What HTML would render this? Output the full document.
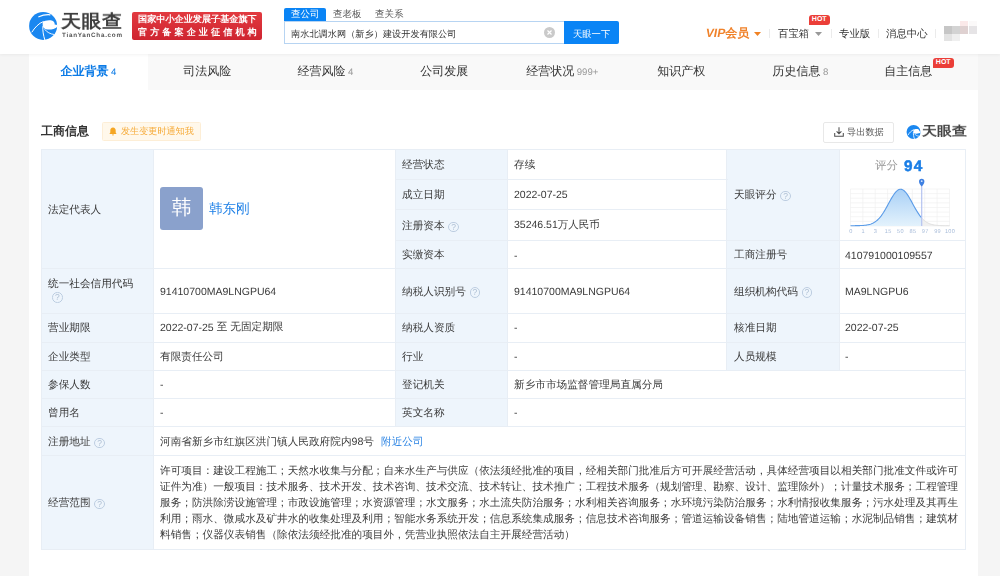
<!DOCTYPE html>
<html><head><meta charset="utf-8">
<style>
*{margin:0;padding:0;box-sizing:border-box}
html,body{width:1000px;height:576px;overflow:hidden}
.abs,.cell,.tab{will-change:transform}
body{text-rendering:geometricPrecision;background:#f5f5f5;font-family:"Liberation Sans",sans-serif;color:#333;position:relative;font-size:10.5px}
.abs{position:absolute;white-space:nowrap}
#hdr{position:absolute;left:0;top:0;width:1000px;height:54px;background:#fff;box-shadow:0 1px 3px rgba(0,0,0,0.05);z-index:2}
#tabs{position:absolute;left:29px;top:54px;width:949px;height:36.3px;background:#f9f9f9}
.tab{position:absolute;top:0;height:36px;width:118.6px;text-align:center;line-height:34px;font-size:12px;color:#333}
.tab.on{background:#fff;color:#0a7ae6;font-weight:bold}
.tab sup{font-size:9.6px;color:#999;vertical-align:0;font-weight:normal;margin-left:2.5px}
.tab.on sup{color:#0a7ae6}
#main{position:absolute;left:29px;top:90px;width:949px;height:486px;background:#fff}
table{position:absolute;left:41px;top:149px;border-collapse:collapse;table-layout:fixed;width:925px}
td{border:1px solid #e5ecf3;font-size:10.5px;color:#333;padding:0 6px;vertical-align:middle;white-space:nowrap}
td.l{background:#eef5fc}
.q{display:inline-block;width:10.5px;height:10.5px;border:1px solid #bccde0;border-radius:50%;color:#aebfd3;font-size:8.5px;line-height:8.5px;text-align:center;vertical-align:-0.5px;margin-left:3.8px;font-weight:normal}
.hot{position:absolute;background:#eb3e38;color:#fff;font-size:7px;font-weight:bold;line-height:10px;height:10px;width:20.5px;text-align:center;border-radius:3px 3px 3px 0.5px}
.sep{position:absolute;top:28.5px;width:1px;height:9px;background:#ebebeb}
.cell{position:absolute;display:flex;align-items:center;padding-top:3px;white-space:nowrap;font-size:10.65px;color:#3a3a3a}
</style></head><body>
<div id="hdr">
  <svg class="abs" style="left:28px;top:10px" width="30" height="32" viewBox="0 0 540 576">
    <circle cx="272" cy="286" r="252" fill="#1a87f0"/>
    <path d="M268 215 C300 188 380 172 440 192 C472 208 484 238 480 262 C495 262 515 265 530 272 L530 300 C490 338 420 356 355 352 C305 348 276 325 268 292 C262 265 262 235 268 215 Z" fill="#fff"/>
    <path d="M195 122 C250 96 330 82 395 86" stroke="#fff" stroke-width="22" fill="none" stroke-linecap="round"/>
    <path d="M68 402 C120 320 190 240 282 205" stroke="#fff" stroke-width="18" fill="none"/>
    <path d="M268 290 C262 370 275 450 305 545" stroke="#fff" stroke-width="18" fill="none"/>
    <path d="M298 345 C340 400 400 432 475 442" stroke="#fff" stroke-width="16" fill="none"/>
  </svg>
  <div class="abs" style="left:61px;top:9.5px;font-size:20px;line-height:23px;color:#3e3e3e;font-weight:bold;letter-spacing:0.5px;transform:scaleY(0.9);transform-origin:0 19px">天眼查</div>
  <div class="abs" style="left:62px;top:31.5px;font-size:6.3px;line-height:7px;color:#555;font-weight:bold;letter-spacing:0.72px">TianYanCha.com</div>
  <div class="abs" style="left:132px;top:12px;width:130px;height:28px;background:linear-gradient(#e23a40,#cf2430);border-radius:2px"></div>
  <div class="abs" style="left:137.5px;top:13px;font-size:9.15px;color:#fff;line-height:13px;font-weight:bold">国家中小企业发展子基金旗下</div>
  <div class="abs" style="left:137.5px;top:26px;font-size:9.15px;color:#fff;line-height:13px;letter-spacing:3.05px;font-weight:bold">官方备案企业征信机构</div>

  <div class="abs" style="left:284px;top:8px;width:42px;height:13px;background:#0a84f5;border-radius:2px 2px 0 0"></div>
  <div class="abs" style="left:290.5px;top:8px;font-size:9.5px;line-height:14px;color:#fff">查公司</div>
  <div class="abs" style="left:332.5px;top:8px;font-size:9.5px;line-height:14px;color:#555">查老板</div>
  <div class="abs" style="left:374.5px;top:8px;font-size:9.5px;line-height:14px;color:#555">查关系</div>
  <div class="abs" style="left:284px;top:21px;width:281px;height:23px;border:1px solid #b7d4f2;border-right:none;background:#fff"></div>
  <div class="abs" style="left:290.5px;top:27px;font-size:9.2px;line-height:14px;color:#333">南水北调水网（新乡）建设开发有限公司</div>
  <div class="abs" style="left:543.5px;top:27px;width:11px;height:11px;border-radius:50%;background:#cacaca"></div>
  <svg class="abs" style="left:543.5px;top:27px" width="11" height="11" viewBox="0 0 11 11"><path d="M3.5 3.5L7.5 7.5M7.5 3.5L3.5 7.5" stroke="#fff" stroke-width="1.2"/></svg>
  <div class="abs" style="left:564px;top:21px;width:55px;height:23px;background:#0a84f5;border-radius:0 2px 2px 0"></div>
  <div class="abs" style="left:573px;top:26.5px;font-size:9.3px;line-height:14px;color:#fff">天眼一下</div>

  <div class="abs" style="left:705.5px;top:25.7px;font-size:12px;line-height:14px;color:#f0822a;font-weight:bold"><span style="display:inline-block;transform:skewX(-10deg);letter-spacing:0px">VIP</span>会员</div>
  <svg class="abs" style="left:754px;top:31.5px" width="7" height="4" viewBox="0 0 7 4"><path d="M0 0H7L3.5 4Z" fill="#f08224"/></svg>
  <div class="sep" style="left:769px"></div>
  <div class="abs" style="left:778px;top:26.5px;font-size:10.4px;line-height:16px;color:#333">百宝箱</div>
  <svg class="abs" style="left:815px;top:31.5px" width="7" height="4" viewBox="0 0 7 4"><path d="M0 0H7L3.5 4Z" fill="#999"/></svg>
  <div class="hot" style="left:809px;top:14.5px;height:10px">HOT</div>
  <div class="sep" style="left:831px"></div>
  <div class="abs" style="left:839px;top:26.5px;font-size:10.4px;line-height:16px;color:#333">专业版</div>
  <div class="sep" style="left:877.5px"></div>
  <div class="abs" style="left:886px;top:26.5px;font-size:10.4px;line-height:16px;color:#333">消息中心</div>
  <div class="sep" style="left:935px"></div>
  <div class="abs" style="left:960.4px;top:21.2px;width:8.2px;height:4.7px;background:#fbe9e9"></div>
  <div class="abs" style="left:968.6px;top:21.2px;width:8.2px;height:4.7px;background:#fbf9f9"></div>
  <div class="abs" style="left:944px;top:25.9px;width:8px;height:8.4px;background:#c6c6c6"></div>
  <div class="abs" style="left:952px;top:25.9px;width:8.4px;height:8.4px;background:#d3d3d3"></div>
  <div class="abs" style="left:960.4px;top:25.9px;width:8.2px;height:8.4px;background:#dfd1d1"></div>
  <div class="abs" style="left:968.6px;top:25.9px;width:8.2px;height:8.4px;background:#e6e4e6"></div>
  <div class="abs" style="left:944px;top:34.3px;width:8px;height:6.5px;background:#e3e3e3"></div>
  <div class="abs" style="left:952px;top:34.3px;width:8.4px;height:6.5px;background:#efefef"></div>
</div>

<div id="tabs">
  <div class="tab on" style="left:0">企业背景<sup>4</sup></div>
  <div class="tab" style="left:118.6px">司法风险</div>
  <div class="tab" style="left:237.2px">经营风险<sup>4</sup></div>
  <div class="tab" style="left:355.8px">公司发展</div>
  <div class="tab" style="left:474.4px">经营状况<sup>999+</sup></div>
  <div class="tab" style="left:593px">知识产权</div>
  <div class="tab" style="left:711.6px">历史信息<sup>8</sup></div>
  <div class="tab" style="left:830.2px;padding-right:20px">自主信息</div>
  <div class="hot" style="left:904px;top:4px">HOT</div>
</div>

<div id="main"></div>
<div class="abs" style="left:41px;top:122.5px;font-size:12px;line-height:16px;font-weight:bold;color:#333">工商信息</div>
<div class="abs" style="left:102px;top:121.5px;width:99px;height:18.5px;background:#fff8eb;border:1px solid #fdeed6;border-radius:1.5px"></div>
<svg class="abs" style="left:108.7px;top:127.3px" width="8" height="9" viewBox="0 0 8 9"><path d="M4 0.6C2.2 0.6 1.3 2 1.3 3.6V5.6L0.4 6.9H7.6L6.7 5.6V3.6C6.7 2 5.8 0.6 4 0.6Z M3 7.6A1 1 0 0 0 5 7.6Z" fill="#f5a623"/></svg>
<div class="abs" style="left:121px;top:125.3px;font-size:9.1px;line-height:13px;color:#f6ab3a">发生变更时通知我</div>
<div class="abs" style="left:823px;top:121.8px;width:70.5px;height:20.7px;background:#fff;border:1px solid #e8e8e8;border-radius:2px"></div>
<svg class="abs" style="left:833.8px;top:126.6px" width="10" height="10" viewBox="0 0 10 10"><path d="M5 0.3V6.6M2.6 4.3L5 6.7L7.4 4.3M0.7 6V9.3H9.3V6" stroke="#505050" stroke-width="1.05" fill="none"/></svg>
<div class="abs" style="left:846.8px;top:125.3px;font-size:9.2px;line-height:14px;color:#555">导出数据</div>
<svg class="abs" style="left:905.5px;top:123.7px" width="15" height="16" viewBox="0 0 540 576">
    <circle cx="272" cy="286" r="252" fill="#1a87f0"/>
    <path d="M268 215 C300 188 380 172 440 192 C472 208 484 238 480 262 C495 262 515 265 530 272 L530 300 C490 338 420 356 355 352 C305 348 276 325 268 292 C262 265 262 235 268 215 Z" fill="#fff"/>
    <path d="M68 402 C120 320 190 240 282 205" stroke="#fff" stroke-width="30" fill="none"/>
    <path d="M268 290 C262 370 275 450 305 545" stroke="#fff" stroke-width="30" fill="none"/>
    <path d="M298 345 C340 400 400 432 475 442" stroke="#fff" stroke-width="26" fill="none"/>
  </svg>
<div class="abs" style="left:921.5px;top:122px;font-size:15px;line-height:18px;color:#444;font-weight:bold;transform:scaleY(0.86);transform-origin:0 15px">天眼查</div>
<!--TABLE-->
<div class="abs" style="left:41.3px;top:149.3px;width:112.3px;height:400.3px;background:#eef5fc"></div>
<div class="abs" style="left:395.2px;top:149.3px;width:112.10000000000002px;height:277.2px;background:#eef5fc"></div>
<div class="abs" style="left:726.7px;top:149.3px;width:112.29999999999995px;height:220.89999999999998px;background:#eef5fc"></div>
<div class="abs" style="left:41.3px;top:148.8px;width:925.1px;height:1px;background:#e8eef5"></div>
<div class="abs" style="left:395.2px;top:178.8px;width:332.50000000000006px;height:1px;background:#e8eef5"></div>
<div class="abs" style="left:395.2px;top:209.2px;width:332.50000000000006px;height:1px;background:#e8eef5"></div>
<div class="abs" style="left:395.2px;top:239.7px;width:571.2px;height:1px;background:#e8eef5"></div>
<div class="abs" style="left:41.3px;top:268.0px;width:925.1px;height:1px;background:#e8eef5"></div>
<div class="abs" style="left:41.3px;top:312.9px;width:925.1px;height:1px;background:#e8eef5"></div>
<div class="abs" style="left:41.3px;top:341.5px;width:925.1px;height:1px;background:#e8eef5"></div>
<div class="abs" style="left:41.3px;top:369.7px;width:925.1px;height:1px;background:#e8eef5"></div>
<div class="abs" style="left:41.3px;top:397.8px;width:925.1px;height:1px;background:#e8eef5"></div>
<div class="abs" style="left:41.3px;top:425.8px;width:925.1px;height:1px;background:#e8eef5"></div>
<div class="abs" style="left:41.3px;top:454.9px;width:925.1px;height:1px;background:#e8eef5"></div>
<div class="abs" style="left:41.3px;top:549.1px;width:925.1px;height:1px;background:#e8eef5"></div>
<div class="abs" style="left:40.8px;top:149.3px;width:1px;height:400.3px;background:#e8eef5"></div>
<div class="abs" style="left:153.1px;top:149.3px;width:1px;height:400.3px;background:#e8eef5"></div>
<div class="abs" style="left:394.7px;top:149.3px;width:1px;height:277.0px;background:#e8eef5"></div>
<div class="abs" style="left:506.8px;top:149.3px;width:1px;height:277.0px;background:#e8eef5"></div>
<div class="abs" style="left:726.2px;top:149.3px;width:1px;height:220.89999999999998px;background:#e8eef5"></div>
<div class="abs" style="left:838.5px;top:149.3px;width:1px;height:220.89999999999998px;background:#e8eef5"></div>
<div class="abs" style="left:964.9px;top:149.3px;width:1px;height:400.3px;background:#e8eef5"></div>
<div class="cell" style="left:47.5px;top:149px;height:120px;padding-top:3px;">法定代表人</div>
<div class="cell" style="left:401.5px;top:149px;height:30px;padding-top:3px;">经营状态</div>
<div class="cell" style="left:514px;top:149px;height:30px;padding-top:3px;">存续</div>
<div class="cell" style="left:401.5px;top:179px;height:30.5px;padding-top:3px;">成立日期</div>
<div class="cell" style="left:514px;top:179px;height:30.5px;padding-top:2px;font-size:10.5px;">2022-07-25</div>
<div class="cell" style="left:401.5px;top:209.5px;height:30.5px;padding-top:3px;">注册资本<span class="q">?</span></div>
<div class="cell" style="left:514px;top:209.5px;height:30.5px;padding-top:2px;font-size:10.5px;">35246.51万人民币</div>
<div class="cell" style="left:401.5px;top:240px;height:29px;padding-top:3px;">实缴资本</div>
<div class="cell" style="left:514px;top:240px;height:29px;padding-top:2px;font-size:10.5px;">-</div>
<div class="cell" style="left:733.5px;top:149px;height:91px;padding-top:3px;">天眼评分<span class="q">?</span></div>
<div class="cell" style="left:733.5px;top:240px;height:29px;padding-top:3px;">工商注册号</div>
<div class="cell" style="left:845px;top:240px;height:29px;padding-top:2px;font-size:10.5px;">410791000109557</div>
<div class="abs" style="left:47.5px;top:276px;font-size:10.65px;line-height:16px;color:#333">统一社会信用代码<br><span class="q" style="margin-left:4px;vertical-align:3px">?</span></div>
<div class="cell" style="left:160px;top:269px;height:44px;padding-top:2px;font-size:10.5px;">91410700MA9LNGPU64</div>
<div class="cell" style="left:401.5px;top:269px;height:44px;padding-top:3px;">纳税人识别号<span class="q">?</span></div>
<div class="cell" style="left:514px;top:269px;height:44px;padding-top:2px;font-size:10.5px;">91410700MA9LNGPU64</div>
<div class="cell" style="left:733.5px;top:269px;height:44px;padding-top:3px;">组织机构代码<span class="q">?</span></div>
<div class="cell" style="left:845px;top:269px;height:44px;padding-top:2px;font-size:10.5px;">MA9LNGPU6</div>
<div class="cell" style="left:47.5px;top:313px;height:28.5px;padding-top:3px;">营业期限</div>
<div class="cell" style="left:160px;top:313px;height:28.5px;padding-top:2px;font-size:10.5px;">2022-07-25&nbsp;<span style="font-size:10.65px">至 无固定期限</span></div>
<div class="cell" style="left:401.5px;top:313px;height:28.5px;padding-top:3px;">纳税人资质</div>
<div class="cell" style="left:514px;top:313px;height:28.5px;padding-top:2px;font-size:10.5px;">-</div>
<div class="cell" style="left:733.5px;top:313px;height:28.5px;padding-top:3px;">核准日期</div>
<div class="cell" style="left:845px;top:313px;height:28.5px;padding-top:2px;font-size:10.5px;">2022-07-25</div>
<div class="cell" style="left:47.5px;top:341.5px;height:28.5px;padding-top:3px;">企业类型</div>
<div class="cell" style="left:160px;top:341.5px;height:28.5px;padding-top:3px;">有限责任公司</div>
<div class="cell" style="left:401.5px;top:341.5px;height:28.5px;padding-top:3px;">行业</div>
<div class="cell" style="left:514px;top:341.5px;height:28.5px;padding-top:2px;font-size:10.5px;">-</div>
<div class="cell" style="left:733.5px;top:341.5px;height:28.5px;padding-top:3px;">人员规模</div>
<div class="cell" style="left:845px;top:341.5px;height:28.5px;padding-top:2px;font-size:10.5px;">-</div>
<div class="cell" style="left:47.5px;top:370px;height:28px;padding-top:3px;">参保人数</div>
<div class="cell" style="left:160px;top:370px;height:28px;padding-top:2px;font-size:10.5px;">-</div>
<div class="cell" style="left:401.5px;top:370px;height:28px;padding-top:3px;">登记机关</div>
<div class="cell" style="left:514px;top:370px;height:28px;padding-top:3px;">新乡市市场监督管理局直属分局</div>
<div class="cell" style="left:47.5px;top:398px;height:28.5px;padding-top:3px;">曾用名</div>
<div class="cell" style="left:160px;top:398px;height:28.5px;padding-top:2px;font-size:10.5px;">-</div>
<div class="cell" style="left:401.5px;top:398px;height:28.5px;padding-top:3px;">英文名称</div>
<div class="cell" style="left:514px;top:398px;height:28.5px;padding-top:2px;font-size:10.5px;">-</div>
<div class="cell" style="left:47.5px;top:426.5px;height:28.5px;padding-top:3px;">注册地址<span class="q">?</span></div>
<div class="cell" style="left:160px;top:426.5px;height:28.5px;padding-top:3px;">河南省新乡市红旗区洪门镇人民政府院内98号<span style="color:#2f86e4;margin-left:7px">附近公司</span></div>
<div class="cell" style="left:47.5px;top:455px;height:95px;padding-top:3px;">经营范围<span class="q">?</span></div>
<div class="abs" style="left:160px;top:463px;font-size:10.65px;line-height:16.05px;color:#3c3c3c">许可项目：建设工程施工；天然水收集与分配；自来水生产与供应（依法须经批准的项目，经相关部门批准后方可开展经营活动，具体经营项目以相关部门批准文件或许可<br>证件为准）一般项目：技术服务、技术开发、技术咨询、技术交流、技术转让、技术推广；工程技术服务（规划管理、勘察、设计、监理除外）；计量技术服务；工程管理<br>服务；防洪除涝设施管理；市政设施管理；水资源管理；水文服务；水土流失防治服务；水利相关咨询服务；水环境污染防治服务；水利情报收集服务；污水处理及其再生<br>利用；雨水、微咸水及矿井水的收集处理及利用；智能水务系统开发；信息系统集成服务；信息技术咨询服务；管道运输设备销售；陆地管道运输；水泥制品销售；建筑材<br>料销售；仪器仪表销售（除依法须经批准的项目外，凭营业执照依法自主开展经营活动）</div>
<div class="abs" style="left:160px;top:187px;width:43px;height:43px;background:#8aa1cc;border-radius:3px;color:#fff;font-size:20px;line-height:43px;text-align:center">韩</div>
<div class="abs" style="left:209px;top:200px;font-size:13.5px;line-height:17px;color:#1a7ee6">韩东刚</div>
<!--/TABLE-->
<!--CHART-->
<svg class="abs" style="left:840px;top:150px" width="126" height="90" viewBox="0 0 126 90">
<defs><linearGradient id="gf" x1="0" y1="0" x2="0" y2="1"><stop offset="0" stop-color="#a9d0f6"/><stop offset="1" stop-color="#e3f2fc"/></linearGradient></defs>
<path d="M10.50 39.00L10.50 76.00M22.88 39.00L22.88 76.00M35.25 39.00L35.25 76.00M47.62 39.00L47.62 76.00M60.00 39.00L60.00 76.00M72.38 39.00L72.38 76.00M84.75 39.00L84.75 76.00M97.12 39.00L97.12 76.00M109.50 39.00L109.50 76.00M10.50 39.00L109.50 39.00M10.50 43.62L109.50 43.62M10.50 48.25L109.50 48.25M10.50 52.88L109.50 52.88M10.50 57.50L109.50 57.50M10.50 62.12L109.50 62.12M10.50 66.75L109.50 66.75M10.50 71.38L109.50 71.38M10.50 76.00L109.50 76.00" stroke="#eeeeee" stroke-width="0.6" fill="none"/>
<path d="M10.50 75.69L11.33 75.69L12.15 75.69L12.98 75.69L13.80 75.68L14.62 75.68L15.45 75.67L16.27 75.66L17.10 75.65L17.92 75.63L18.75 75.62L19.58 75.59L20.40 75.57L21.23 75.53L22.05 75.49L22.88 75.44L23.70 75.38L24.52 75.30L25.35 75.21L26.17 75.10L27.00 74.98L27.83 74.82L28.65 74.65L29.48 74.44L30.30 74.19L31.12 73.91L31.95 73.59L32.77 73.22L33.60 72.80L34.42 72.32L35.25 71.78L36.08 71.18L36.90 70.51L37.73 69.77L38.55 68.95L39.38 68.06L40.20 67.10L41.02 66.05L41.85 64.93L42.67 63.74L43.50 62.48L44.33 61.15L45.15 59.77L45.98 58.33L46.80 56.86L47.62 55.36L48.45 53.84L49.27 52.32L50.10 50.81L50.92 49.33L51.75 47.89L52.58 46.51L53.40 45.21L54.23 44.00L55.05 42.90L55.88 41.92L56.70 41.08L57.52 40.38L58.35 39.84L59.17 39.46L60.00 39.25L60.83 39.21L61.65 39.34L62.48 39.64L63.30 40.11L64.12 40.74L64.95 41.52L65.77 42.44L66.60 43.49L67.42 44.65L68.25 45.91L69.08 47.26L69.90 48.67L70.73 50.13L71.55 51.63L72.38 53.15L73.20 54.67L74.02 56.18L74.85 57.67L75.67 59.12L76.50 60.53L77.33 61.88L78.15 63.17L78.98 64.40L79.80 65.55L80.62 66.63L81.45 67.63L81.70 67.92L81.70 76.00L10.50 76.00Z" fill="url(#gf)"/>
<path d="M81.70 67.92L82.27 68.56L83.10 69.41L83.92 70.18L84.75 70.88L85.58 71.51L86.40 72.08L87.23 72.59L88.05 73.03L88.88 73.43L89.70 73.77L90.52 74.07L91.35 74.33L92.17 74.55L93.00 74.75L93.83 74.91L94.65 75.05L95.48 75.17L96.30 75.26L97.12 75.34L97.95 75.41L98.77 75.47L99.60 75.51L100.42 75.55L101.25 75.58L102.08 75.61L102.90 75.63L103.73 75.64L104.55 75.66L105.38 75.67L106.20 75.67L107.02 75.68L107.85 75.68L108.67 75.69L109.50 75.69L109.50 76.00L81.70 76.00Z" fill="#f0f0f0"/>
<path d="M10.50 75.69L11.33 75.69L12.15 75.69L12.98 75.69L13.80 75.68L14.62 75.68L15.45 75.67L16.27 75.66L17.10 75.65L17.92 75.63L18.75 75.62L19.58 75.59L20.40 75.57L21.23 75.53L22.05 75.49L22.88 75.44L23.70 75.38L24.52 75.30L25.35 75.21L26.17 75.10L27.00 74.98L27.83 74.82L28.65 74.65L29.48 74.44L30.30 74.19L31.12 73.91L31.95 73.59L32.77 73.22L33.60 72.80L34.42 72.32L35.25 71.78L36.08 71.18L36.90 70.51L37.73 69.77L38.55 68.95L39.38 68.06L40.20 67.10L41.02 66.05L41.85 64.93L42.67 63.74L43.50 62.48L44.33 61.15L45.15 59.77L45.98 58.33L46.80 56.86L47.62 55.36L48.45 53.84L49.27 52.32L50.10 50.81L50.92 49.33L51.75 47.89L52.58 46.51L53.40 45.21L54.23 44.00L55.05 42.90L55.88 41.92L56.70 41.08L57.52 40.38L58.35 39.84L59.17 39.46L60.00 39.25L60.83 39.21L61.65 39.34L62.48 39.64L63.30 40.11L64.12 40.74L64.95 41.52L65.77 42.44L66.60 43.49L67.42 44.65L68.25 45.91L69.08 47.26L69.90 48.67L70.73 50.13L71.55 51.63L72.38 53.15L73.20 54.67L74.02 56.18L74.85 57.67L75.67 59.12L76.50 60.53L77.33 61.88L78.15 63.17L78.98 64.40L79.80 65.55L80.62 66.63L81.45 67.63L81.70 67.92" stroke="#5b9ce8" stroke-width="1.1" fill="none"/>
<path d="M81.70 67.92L82.27 68.56L83.10 69.41L83.92 70.18L84.75 70.88L85.58 71.51L86.40 72.08L87.23 72.59L88.05 73.03L88.88 73.43L89.70 73.77L90.52 74.07L91.35 74.33L92.17 74.55L93.00 74.75L93.83 74.91L94.65 75.05L95.48 75.17L96.30 75.26L97.12 75.34L97.95 75.41L98.77 75.47L99.60 75.51L100.42 75.55L101.25 75.58L102.08 75.61L102.90 75.63L103.73 75.64L104.55 75.66L105.38 75.67L106.20 75.67L107.02 75.68L107.85 75.68L108.67 75.69L109.50 75.69" stroke="#dedede" stroke-width="1" fill="none"/>
<path d="M81.70 34.00L81.70 76.00" stroke="#b4c2f0" stroke-width="1.2"/>
<path d="M81.70 36.50C80.50 35.00 79.00 33.40 79.00 31.40A2.7 2.7 0 1 1 84.40 31.40C84.40 33.40 82.90 35.00 81.70 36.50Z" fill="#3f80e2"/>
<circle cx="81.70" cy="31.20" r="0.9" fill="#cfe0fa"/>
<text x="11.00" y="83.00" font-size="5.6" fill="#a8bcd9" text-anchor="middle" font-family="Liberation Sans" letter-spacing="0.3">0</text>
<text x="23.20" y="83.00" font-size="5.6" fill="#a8bcd9" text-anchor="middle" font-family="Liberation Sans" letter-spacing="0.3">1</text>
<text x="35.40" y="83.00" font-size="5.6" fill="#a8bcd9" text-anchor="middle" font-family="Liberation Sans" letter-spacing="0.3">3</text>
<text x="48.20" y="83.00" font-size="5.6" fill="#a8bcd9" text-anchor="middle" font-family="Liberation Sans" letter-spacing="0.3">15</text>
<text x="60.40" y="83.00" font-size="5.6" fill="#a8bcd9" text-anchor="middle" font-family="Liberation Sans" letter-spacing="0.3">50</text>
<text x="73.00" y="83.00" font-size="5.6" fill="#a8bcd9" text-anchor="middle" font-family="Liberation Sans" letter-spacing="0.3">85</text>
<text x="85.20" y="83.00" font-size="5.6" fill="#a8bcd9" text-anchor="middle" font-family="Liberation Sans" letter-spacing="0.3">97</text>
<text x="97.60" y="83.00" font-size="5.6" fill="#a8bcd9" text-anchor="middle" font-family="Liberation Sans" letter-spacing="0.3">99</text>
<text x="110.00" y="83.00" font-size="5.6" fill="#a8bcd9" text-anchor="middle" font-family="Liberation Sans" letter-spacing="0.3">100</text>
</svg>
<div class="abs" style="left:874.5px;top:159.3px;font-size:11.4px;line-height:14px;color:#999">评分</div>
<div class="abs" style="left:904px;top:158px;font-size:15.3px;line-height:18px;color:#1a7ee6;font-weight:bold;letter-spacing:1.3px;-webkit-text-stroke:0.5px #1a7ee6">94</div>
<!--/CHART-->
</body></html>
